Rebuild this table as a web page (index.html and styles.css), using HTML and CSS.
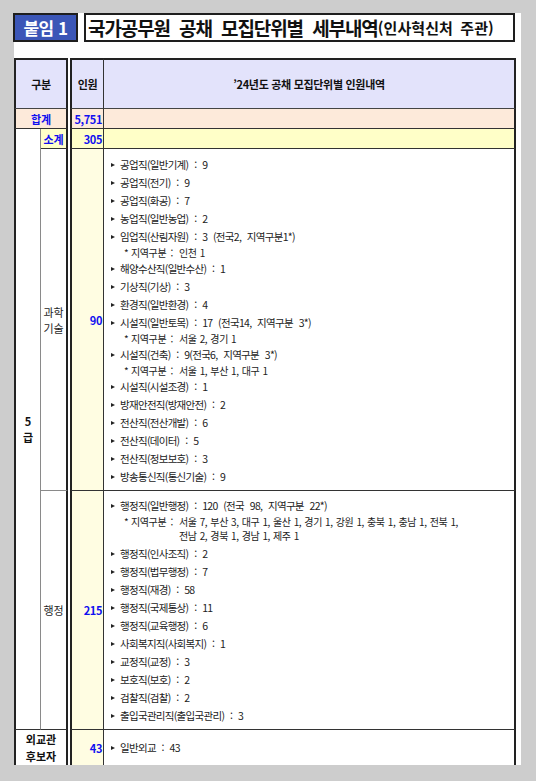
FILE: index.html
```html
<!DOCTYPE html>
<html lang="ko">
<head>
<meta charset="utf-8">
<link rel="stylesheet" href="styles.css">
</head>
<body>
<div class="sheet">
  <div class="head">
    <div class="badge">붙임 1</div>
    <div class="title">국가공무원 공채 모집단위별 세부내역<span class="title-sub">(인사혁신처 주관)</span></div>
  </div>

  <div class="grid">
    <div class="cell l-gubun hdr">구분</div>
    <div class="cell l-total blue">합계</div>
    <div class="cell l-grade bold">5<br>급</div>
    <div class="cell l-subtotal blue">소계</div>
    <div class="cell l-sci">과학<br>기술</div>
    <div class="cell l-adm">행정</div>
    <div class="cell l-dip bold">외교관<br>후보자</div>

    <div class="cell r-h1 hdr">인원</div>
    <div class="cell r-h2 hdr">’24년도 공채 모집단위별 인원내역</div>
    <div class="cell r-t1 num">5,751</div>
    <div class="cell r-t2"></div>
    <div class="cell r-s1 num">305</div>
    <div class="cell r-s2"></div>

    <div class="cell r-n r-n-sci num">90</div>
    <div class="cell r-c r-c-sci">
      <div class="item">공업직(일반기계) : 9</div>
      <div class="item">공업직(전기) : 9</div>
      <div class="item">공업직(화공) : 7</div>
      <div class="item">농업직(일반농업) : 2</div>
      <div class="item">임업직(산림자원) : 3 (전국2, 지역구분1*)</div>
      <div class="sub"><span class="star">*</span><span class="lbl">지역구분 :</span><span class="vals">인천 1</span></div>
      <div class="item">해양수산직(일반수산) : 1</div>
      <div class="item">기상직(기상) : 3</div>
      <div class="item">환경직(일반환경) : 4</div>
      <div class="item">시설직(일반토목) : 17 (전국14, 지역구분 3*)</div>
      <div class="sub"><span class="star">*</span><span class="lbl">지역구분 :</span><span class="vals">서울 2, 경기 1</span></div>
      <div class="item">시설직(건축) : 9(전국6, 지역구분 3*)</div>
      <div class="sub"><span class="star">*</span><span class="lbl">지역구분 :</span><span class="vals">서울 1, 부산 1, 대구 1</span></div>
      <div class="item">시설직(시설조경) : 1</div>
      <div class="item">방재안전직(방재안전) : 2</div>
      <div class="item">전산직(전산개발) : 6</div>
      <div class="item">전산직(데이터) : 5</div>
      <div class="item">전산직(정보보호) : 3</div>
      <div class="item">방송통신직(통신기술) : 9</div>
    </div>

    <div class="cell r-n r-n-adm num">215</div>
    <div class="cell r-c r-c-adm">
      <div class="item">행정직(일반행정) : 120 (전국 98, 지역구분 22*)</div>
      <div class="sub sub-2"><span class="star">*</span><span class="lbl">지역구분 :</span><span class="vals">서울 7, 부산 3, 대구 1, 울산 1, 경기 1, 강원 1, 충북 1, 충남 1, 전북 1,<br>전남 2, 경북 1, 경남 1, 제주 1</span></div>
      <div class="item">행정직(인사조직) : 2</div>
      <div class="item">행정직(법무행정) : 7</div>
      <div class="item">행정직(재경) : 58</div>
      <div class="item">행정직(국제통상) : 11</div>
      <div class="item">행정직(교육행정) : 6</div>
      <div class="item">사회복지직(사회복지) : 1</div>
      <div class="item">교정직(교정) : 3</div>
      <div class="item">보호직(보호) : 2</div>
      <div class="item">검찰직(검찰) : 2</div>
      <div class="item">출입국관리직(출입국관리) : 3</div>
    </div>

    <div class="cell r-n r-n-dip num">43</div>
    <div class="cell r-c r-c-dip">
      <div class="item">일반외교 : 43</div>
    </div>
  </div>
</div>
</body>
</html>
```
FILE: styles.css
```css
* { box-sizing: border-box; }

body {
  margin: 0;
  background: #cdcdcd;
  font-family: "Noto Sans CJK KR", "Noto Sans", sans-serif;
  color: #1f1f1f;
}

.sheet {
  margin: 15px 0 0 14px;
  width: 507px;
  height: 752px;
  background: #ffffff;
}

.head {
  display: flex;
  gap: 6px;
  margin: -2px 0 0 -1px;
  width: 502px;
  height: 29px;
}

.badge {
  width: 65px;
  border: 2px solid #1e1e1e;
  background: #3b56b7;
  color: #ffffff;
  font-weight: bold;
  font-size: 17px;
  letter-spacing: -0.5px;
  display: flex;
  align-items: center;
  justify-content: center;
}

.title {
  flex: 1;
  border: 2px solid #1e1e1e;
  display: flex;
  align-items: center;
  padding-left: 2px;
  font-weight: bold;
  font-size: 19px;
  letter-spacing: -1.1px;
  word-spacing: 5px;
  color: #111;
  white-space: nowrap;
}

.title-sub {
  font-size: 15px;
  letter-spacing: 0.1px;
  word-spacing: 3px;
}

.grid {
  margin-top: 16px;
  display: grid;
  grid-template-columns: 27px 27px 2px 34px 412px;
  grid-template-rows: 51px 20px 20px auto auto 37px;
}

.cell {
  display: flex;
  align-items: center;
  justify-content: center;
  font-size: 11px;
  text-align: center;
  line-height: 16px;
}

.hdr { font-weight: bold; background: #e3e3fb; color: #111; letter-spacing: -0.3px; }
.bold { font-weight: bold; color: #111; }
.blue { color: #1010f0; font-weight: bold; }
.num {
  color: #1010f0;
  font-weight: bold;
  justify-content: flex-end;
  padding-right: 1px;
  letter-spacing: -0.4px;
}

/* left block */
.l-gubun {
  grid-column: 1 / 3; grid-row: 1;
  border-top: 2px solid #222; border-left: 2px solid #222;
  border-right: 2px solid #222; border-bottom: 1px solid #444;
}
.l-total {
  grid-column: 1 / 3; grid-row: 2;
  background: #fdeada;
  border-left: 2px solid #222; border-right: 2px solid #222;
  border-bottom: 1px solid #333;
}
.l-grade {
  grid-column: 1; grid-row: 3 / 6;
  border-left: 2px solid #222; border-right: 1px solid #8a8a8a;
  border-bottom: 1px solid #333;
}
.l-subtotal {
  grid-column: 2; grid-row: 3;
  background: #ffffc8;
  border-right: 2px solid #222; border-bottom: 1px solid #333;
}
.l-sci {
  grid-column: 2; grid-row: 4;
  border-right: 2px solid #222; border-bottom: 1px solid #8a8a8a;
}
.l-adm {
  grid-column: 2; grid-row: 5;
  border-right: 2px solid #222; border-bottom: 1px solid #333;
}
.l-dip {
  grid-column: 1 / 3; grid-row: 6;
  border-left: 2px solid #222; border-right: 2px solid #222;
  border-bottom: 2px solid #222;
  line-height: 17px;
}

/* right block */
.r-h1 {
  grid-column: 4; grid-row: 1;
  border-top: 2px solid #222; border-left: 2px solid #222;
  border-right: 1px solid #333; border-bottom: 1px solid #444;
  justify-content: center;
}
.r-h2 {
  grid-column: 5; grid-row: 1;
  border-top: 2px solid #222; border-right: 2px solid #222;
  border-bottom: 1px solid #444;
}
.r-t1, .r-t2 { grid-row: 2; background: #fdeada; border-bottom: 1px solid #333; }
.r-s1, .r-s2 { grid-row: 3; background: #ffffc8; border-bottom: 1px solid #333; }
.r-t1, .r-s1 { grid-column: 4; border-left: 2px solid #222; border-right: 1px solid #333; }
.r-t2, .r-s2 { grid-column: 5; border-right: 2px solid #222; }

.r-n {
  grid-column: 4;
  background: #fffde2;
  border-left: 2px solid #222; border-right: 1px solid #333;
  border-bottom: 1px solid #333;
}
.r-c {
  grid-column: 5;
  border-right: 2px solid #222;
  border-bottom: 1px solid #333;
  display: block;
  text-align: left;
  padding: 7px 0 4px 7px;
}
.r-n-sci, .r-c-sci { grid-row: 4; }
.r-n-adm, .r-c-adm { grid-row: 5; }
.r-n-dip, .r-c-dip { grid-row: 6; border-bottom: 2px solid #222; }
.r-c-adm { padding-top: 6px; }
.r-c-dip { display: flex; align-items: center; justify-content: flex-start; padding: 0 0 0 7px; }

.item {
  font-size: 10.5px;
  line-height: 18px;
  letter-spacing: -0.7px;
  word-spacing: 3.5px;
  white-space: nowrap;
  color: #222;
  display: flex;
  align-items: center;
}
.item::before {
  content: "";
  width: 0;
  height: 0;
  border-left: 4px solid #222;
  border-top: 2.5px solid transparent;
  border-bottom: 2.5px solid transparent;
  margin-right: 5px;
  flex: none;
}

.sub {
  display: flex;
  font-size: 10px;
  line-height: 14px;
  letter-spacing: -0.4px;
  word-spacing: 0.7px;
  padding-left: 13px;
  color: #222;
  white-space: nowrap;
}
.sub-2 { padding-bottom: 2px; }
.star { width: 7px; }
.lbl { margin-right: 6px; word-spacing: 2px; }
```
